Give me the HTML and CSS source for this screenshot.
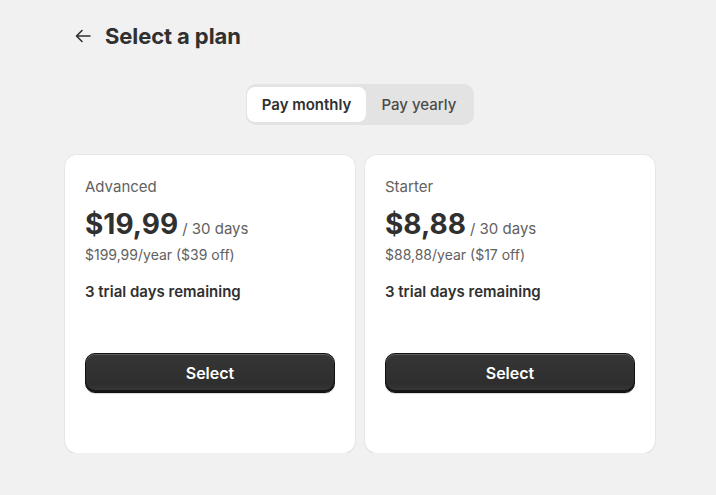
FILE: index.html
```html
<!DOCTYPE html>
<html>
<head>
<meta charset="utf-8">
<link rel="stylesheet" href="styles.css">
</head>
<body>
<div class="page">
  <header class="header">
    <button class="back" aria-label="Back">
      <svg width="20" height="20" viewBox="0 0 20 20"><path d="M17 10H4M9 4.5L3.5 10 9 15.5" fill="none" stroke="#303030" stroke-width="1.6" stroke-linecap="round" stroke-linejoin="round"/></svg>
    </button>
    <h1 class="title">Select a plan</h1>
  </header>
  <div class="toggle-wrap">
    <div class="toggle">
      <span class="opt active">Pay monthly</span>
      <span class="opt">Pay yearly</span>
    </div>
  </div>
  <div class="cards">
    <div class="card">
      <div class="plan">Advanced</div>
      <div class="price-row"><span class="price">$19,99</span><span class="period">/ 30 days</span></div>
      <div class="yearly">$199,99/year ($39 off)</div>
      <div class="trial">3 trial days remaining</div>
      <button class="select">Select</button>
    </div>
    <div class="card">
      <div class="plan">Starter</div>
      <div class="price-row"><span class="price">$8,88</span><span class="period">/ 30 days</span></div>
      <div class="yearly">$88,88/year ($17 off)</div>
      <div class="trial">3 trial days remaining</div>
      <button class="select">Select</button>
    </div>
  </div>
</div>
</body>
</html>
```
FILE: styles.css
```css
html, body { margin: 0; padding: 0; }
body {
  background: #f1f1f1;
  font-family: Inter, "Noto Sans", sans-serif;
  color: #303030;
}
.page {
  width: 590px;
  margin-left: 65px;
  padding-top: 22px;
}
.header {
  display: flex;
  align-items: center;
  height: 28px;
  gap: 11px;
}
.back {
  border: 0;
  background: none;
  padding: 0;
  margin-left: 7px;
  width: 22px;
  height: 22px;
  display: flex;
  align-items: center;
  justify-content: center;
}
.title {
  margin: 0;
  font-size: 22px;
  font-weight: 650;
  letter-spacing: -0.1px;
  color: #303030;
}
.toggle-wrap {
  display: flex;
  justify-content: center;
  margin-top: 34px;
}
.toggle {
  display: flex;
  background: #e3e3e3;
  border-radius: 10px;
  padding: 3px 3px 3px 1px;
}
.opt {
  font-size: 15px;
  font-weight: 500;
  color: #4a4a4a;
  padding: 0 15px;
  height: 35px;
  display: flex;
  align-items: center;
  border-radius: 8px;
}
.opt.active {
  background: #fff;
  color: #303030;
  font-weight: 600;
}
.cards {
  display: grid;
  grid-template-columns: 1fr 1fr;
  gap: 10px;
  margin-top: 30px;
}
.card {
  background: #fff;
  border-radius: 12px;
  box-shadow: 0 1px 0 rgba(26,26,26,0.07), 0 0 0 1px rgba(0,0,0,0.04);
  padding: 22px 20px 60px;
  display: flex;
  flex-direction: column;
}
.plan {
  font-size: 15px;
  color: #616161;
  line-height: 20px;
}
.price-row {
  display: flex;
  align-items: baseline;
  gap: 4px;
  margin-top: 9px;
}
.price {
  font-size: 28px;
  font-weight: 700;
  line-height: 36px;
  color: #303030;
}
.period {
  font-size: 15px;
  color: #616161;
}
.yearly {
  font-size: 14px;
  color: #616161;
  line-height: 20px;
  margin-top: 3px;
}
.trial {
  font-size: 15px;
  font-weight: 600;
  color: #303030;
  margin-top: 17px;
  line-height: 20px;
}
.select {
  margin-top: 51px;
  height: 40px;
  border-radius: 10px;
  border: 1px solid #111;
  background: linear-gradient(#363636 0%, #2e2e2e 80%, #3a3a3a 100%);
  box-shadow: inset 0 1px 0 rgba(255,255,255,0.2), inset 0 -2px 0 rgba(0,0,0,0.6), 0 1px 1px rgba(0,0,0,0.15);
  color: #fff;
  font-family: inherit;
  font-size: 16px;
  font-weight: 600;
  cursor: pointer;
}
```
